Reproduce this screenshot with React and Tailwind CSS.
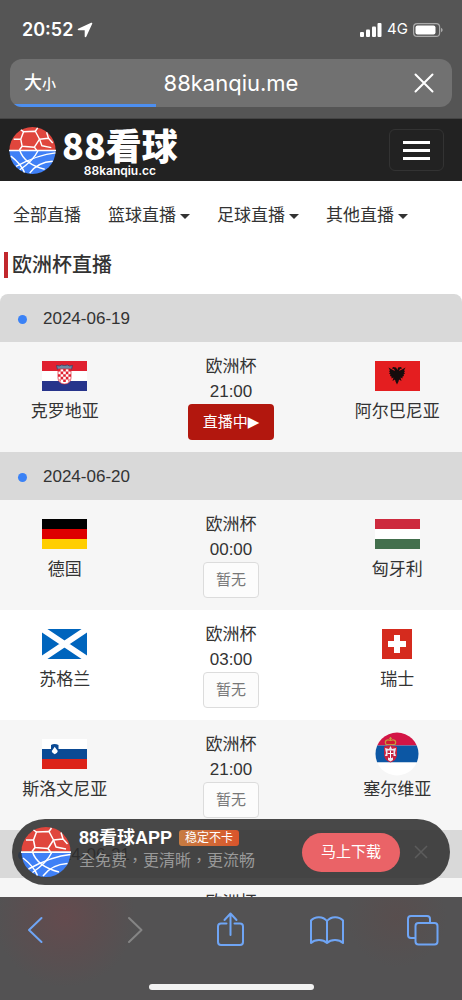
import React from "react";

function BallLogo({ className }) {
  return (
    <svg viewBox="0 0 100 100" className={className} aria-hidden="true">
      <path d="M1 49A49 49 0 0 1 99 49Z" fill="#e0463d" />
      <path d="M1 51A49 49 0 0 0 99 51Z" fill="#3f80f6" />
      <g fill="none" stroke="#fff" strokeWidth="3" strokeLinejoin="round">
        <path d="M0 50H100" strokeWidth="3.5" />
        <path d="M31 10L56 9L65 26L54 43L28 41L25 26Z" />
        <path d="M31 10L25 6M56 9L61 2M25 26L10 26M28 41L22 49M54 43L59 50M65 26L84 24M84 24L80 11M84 24L93 34M65 26L70 40L90 44" />
        <path d="M4 62C17 72 28 85 33 97" />
        <path d="M99 55C66 58 37 72 15 84" />
        <path d="M23 50C29 68 45 82 76 90" />
        <path d="M62 50C54 67 39 80 23 91" />
        <path d="M93 73C75 74 56 82 44 98" />
      </g>
    </svg>
  );
}

const flagBox = "h-[30px] w-[45px]";

const flags = {
  croatia: (
    <svg viewBox="0 0 45 30" className={flagBox} aria-hidden="true">
      <path fill="#fff" d="M0 0h45v30H0z" />
      <path fill="#e02030" d="M0 0h45v10H0z" />
      <path fill="#27348b" d="M0 20h45v10H0z" />
      <path d="M15.500 8.500l-1-4 3 .5 2-1 3 .5 3-.5 2 1 3-.5-1 4z" fill="#6c8ba5" stroke="#34446b" strokeWidth=".8" />
      <path d="M16 8h13v9c0 8-13 8-13 0z" fill="#fff" />
      <g fill="#e02030">
        <path d="M16 8h2.6v2.6H16zM21.2 8h2.6v2.6h-2.6zM26.4 8H29v2.6h-2.6zM18.6 10.600h2.6v2.6h-2.6zM23.800 10.600h2.6v2.6h-2.6zM16 13.200h2.6v2.600H16zM21.200 13.200h2.600v2.600h-2.600zM26.400 13.200H29v2.600h-2.600zM18.600 15.800h2.600v2.600h-2.600zM23.800 15.800h2.600v2.600h-2.600zM17 18.400h1.600V21zM21.200 18.400h2.600v2.600h-2.600zM26.400 18.400H28l-1.600 2.600z" />
      </g>
      <path d="M16 8h13v9c0 8-13 8-13 0z" fill="none" stroke="#e02030" strokeWidth=".7" />
    </svg>
  ),
  albania: (
    <svg viewBox="0 0 45 30" className={flagBox} aria-hidden="true">
      <path fill="#e41e20" d="M0 0h45v30H0z" />
      <path d="M22.500 9l-1.500-2.500-3-.5-1 1.500 2 .5 1 2-3-1.500-3.500-2 1.500 3-1 .5 1 1.500-1 1 1.500 1-.5 1.500 1.500.5v2l2-1-1 3.500 2.500-1.500.5 2 1.500 3 1.500-3 .5-2 2.500 1.500-1-3.500 2 1v-2l1.500-.5-.5-1.500 1.500-1-1-1 1-1.500-1-.5 1.500-3-3.500 2-3 1.500 1-2 2-.5-1-1.500-3 .5z" fill="#160c0c" />
    </svg>
  ),
  germany: (
    <svg viewBox="0 0 45 30" className={flagBox} aria-hidden="true">
      <path d="M0 0h45v10H0z" />
      <path fill="#de0000" d="M0 10h45v10H0z" />
      <path fill="#ffce00" d="M0 20h45v10H0z" />
    </svg>
  ),
  hungary: (
    <svg viewBox="0 0 45 30" className={flagBox} aria-hidden="true">
      <path fill="#fff" d="M0 0h45v30H0z" />
      <path fill="#cd2a3e" d="M0 0h45v10H0z" />
      <path fill="#436f4d" d="M0 20h45v10H0z" />
    </svg>
  ),
  scotland: (
    <svg viewBox="0 0 45 30" className={flagBox} aria-hidden="true">
      <path fill="#0065bd" d="M0 0h45v30H0z" />
      <path d="M0 0L45 30M45 0L0 30" stroke="#fff" strokeWidth="6" />
    </svg>
  ),
  switzerland: (
    <svg viewBox="0 0 30 30" className="h-[30px] w-[30px]" aria-hidden="true">
      <path fill="#d52b1e" d="M0 0h30v30H0z" />
      <path fill="#fff" d="M12 6h6v6h6v6h-6v6h-6v-6H6v-6h6z" />
    </svg>
  ),
  slovenia: (
    <svg viewBox="0 0 45 30" className={flagBox} aria-hidden="true">
      <path fill="#fff" d="M0 0h45v10H0z" />
      <path fill="#0b4a94" d="M0 10h45v10H0z" />
      <path fill="#dc2319" d="M0 20h45v10H0z" />
      <path d="M9 6c2-1.500 5-1.500 7.500 0v5c0 2.500-1.500 4-3.700 5C10.500 15 9 13.500 9 11z" fill="#0b4a94" />
      <path d="M9.700 12l1.500-2 1.500-2.200L14.300 10l1.500 2c-.3 1.500-1.500 2.500-3 3.200-1.500-.7-2.800-1.700-3.100-3.200z" fill="#fff" />
    </svg>
  ),
  serbia: (
    <svg viewBox="0 0 44 44" className="h-[44px] w-[44px]" aria-hidden="true">
      <clipPath id="serbia-disc">
        <circle cx="22" cy="22" r="21.500" />
      </clipPath>
      <g clipPath="url(#serbia-disc)">
        <path fill="#d31545" d="M0 0h44v13.500H0z" />
        <path fill="#0c57a4" d="M0 13.500h44v17H0z" />
        <path fill="#fff" d="M0 30.500h44V44H0z" />
        <path d="M9 15c3-2 8-2 13 0v7c0 4-2 7-6.500 8.500C11 29 9 26 9 22z" fill="#c9223f" />
        <path d="M15.500 14l1.500 3 4-1-1 5 1 3-3 0 0 4-2.500 1.500L13 28v-4h-3l1-3-1-5 4 1z" fill="#eceaf2" />
        <path d="M12.500 18.500h6v6c-1 2-5 2-6 0z" fill="#c9223f" />
        <path d="M15.500 18.500v7.500M12.500 21.500h6" stroke="#fff" strokeWidth="1" />
        <path d="M11 12.500c-2-4 1-5.500 4.500-4 3.500-1.500 6.500 0 4.500 4z" fill="#d3192f" stroke="#c49a3c" strokeWidth="1.200" />
        <path d="M15.500 5v3M14 6.300h3" stroke="#c49a3c" />
      </g>
    </svg>
  ),
  denmark: (
    <svg viewBox="0 0 45 30" className={flagBox} aria-hidden="true">
      <path fill="#c8102e" d="M0 0h45v30H0z" />
      <path d="M17.500 0v30M0 15h45" stroke="#fff" strokeWidth="5" />
    </svg>
  ),
  england: (
    <svg viewBox="0 0 45 30" className={flagBox} aria-hidden="true">
      <path fill="#fff" d="M0 0h45v30H0z" />
      <path d="M22.500 0v30M0 15h45" stroke="#ce1124" strokeWidth="5" />
    </svg>
  ),
};

const schedule = [
  {
    date: "2024-06-19",
    matches: [
      { time: "21:00", live: true, home: ["croatia", "克罗地亚"], away: ["albania", "阿尔巴尼亚"] },
    ],
  },
  {
    date: "2024-06-20",
    matches: [
      { time: "00:00", home: ["germany", "德国"], away: ["hungary", "匈牙利"] },
      { time: "03:00", home: ["scotland", "苏格兰"], away: ["switzerland", "瑞士"] },
      { time: "21:00", home: ["slovenia", "斯洛文尼亚"], away: ["serbia", "塞尔维亚"] },
    ],
  },
  {
    date: "2024-06-21",
    matches: [{ time: "00:00", home: ["denmark", "丹麦"], away: ["england", "英格兰"] }],
  },
];

function Team({ team }) {
  return (
    <div className="flex flex-col items-center">
      <div className="flex h-[44px] items-center">{flags[team[0]]}</div>
      <span className="whitespace-nowrap leading-[28px]">{team[1]}</span>
    </div>
  );
}

function MatchRow({ match }) {
  return (
    <li className="grid grid-cols-[28%_1fr_28%] py-3 odd:bg-[#f6f6f6] even:bg-white">
      <Team team={match.home} />
      <div className="flex flex-col items-center">
        <span className="leading-[26px]">欧洲杯</span>
        <time className="leading-[24px]">{match.time}</time>
        {match.live ? (
          <button className="flex h-9 items-center rounded bg-[#b2170e] px-[15px] text-[15px] text-white">
            直播中<span className="font-['DejaVu_Sans']">▶</span>
          </button>
        ) : (
          <button className="h-9 rounded border border-[#dcdcdc] bg-[#fcfcfc] px-3 text-[15px] text-[#777]">
            暂无
          </button>
        )}
      </div>
      <Team team={match.away} />
    </li>
  );
}

function NavLink({ label, menu }) {
  return (
    <a href="#" className="flex items-center gap-1 whitespace-nowrap">
      {label}
      {menu && (
        <svg viewBox="0 0 10 5" className="h-[5px] w-[10px]" aria-hidden="true">
          <path d="M0 0h10L5 5z" fill="#333" />
        </svg>
      )}
    </a>
  );
}

function BrowserTop() {
  return (
    <header className="shrink-0 border-b border-[#444] bg-[#555] px-[10px] pb-[11px] font-[Inter,'Noto_Sans_CJK_SC',sans-serif] text-white">
      <div className="flex h-[59px] items-center justify-between pl-3 pr-[9px]">
        <div className="flex items-center gap-1">
          <span className="text-[18px] font-semibold">20:52</span>
          <svg viewBox="0 0 16 16" className="h-4 w-4" aria-hidden="true">
            <path d="M14.500 1.500L1.500 7.500H8.500V14.500z" fill="#fff" stroke="#fff" strokeWidth="1.600" strokeLinejoin="round" />
          </svg>
        </div>
        <div className="flex items-center gap-[5px]">
          <svg viewBox="0 0 22 14" className="h-[14px] w-[22px]" aria-hidden="true">
            <g fill="#fff">
              <rect x="0" y="9" width="4" height="5" rx="1" />
              <rect x="6" y="6.500" width="4" height="7.500" rx="1" />
              <rect x="12" y="3.500" width="4" height="10.500" rx="1" />
              <rect x="17.500" y="0" width="4" height="14" rx="1" />
            </g>
          </svg>
          <span className="text-[15px]">4G</span>
          <svg viewBox="0 0 30 14" className="h-[14px] w-[30px]" aria-hidden="true">
            <rect x=".6" y=".6" width="26" height="12.800" rx="3.500" fill="none" stroke="#aaa" strokeWidth="1.200" />
            <rect x="2.500" y="2.500" width="20" height="9" rx="2" fill="#fff" />
            <path d="M28 4.700q1.700.7 1.700 2.300T28 9.300z" fill="#aaa" />
          </svg>
        </div>
      </div>
      <div className="relative flex h-12 items-center justify-between overflow-hidden rounded-xl bg-[#717171] px-[14px]">
        <button className="w-7 whitespace-nowrap text-left font-medium" aria-label="大小">
          <span className="text-[18px]">大</span>
          <span className="text-[14px]">小</span>
        </button>
        <span className="text-[22px]">88kanqiu.me</span>
        <button className="flex w-7 justify-center" aria-label="停止">
          <svg viewBox="0 0 20 20" className="h-5 w-5" aria-hidden="true">
            <path d="M1.500 1.500l17 17M18.500 1.500l-17 17" stroke="#fff" strokeWidth="2" strokeLinecap="round" />
          </svg>
        </button>
        <div className="absolute bottom-0 left-0 h-[3px] w-[33%] bg-[#4d8ff0]" />
      </div>
    </header>
  );
}

function BrowserBottom() {
  const icon = "h-9 w-[34px] fill-none stroke-[#6fa5f5] stroke-2";
  return (
    <footer className="flex shrink-0 flex-col items-center bg-[#535253] bg-[radial-gradient(circle_at_65px_20px,#644b4e_0px,#5b4e50_35px,transparent_70px),radial-gradient(circle_at_397px_20px,#584e4e_0px,transparent_50px)] pb-[10px]">
      <nav className="flex w-full justify-between px-[22px] pb-9 pt-[15px]">
        <button aria-label="后退">
          <svg viewBox="0 0 34 36" className={icon}>
            <path d="M19.500 6L7 18l12.500 12" strokeLinecap="round" strokeLinejoin="round" />
          </svg>
        </button>
        <button aria-label="前进">
          <svg viewBox="0 0 34 36" className="h-9 w-[34px] fill-none stroke-[#858585] stroke-2">
            <path d="M11 6l12.500 12L11 30" strokeLinecap="round" strokeLinejoin="round" />
          </svg>
        </button>
        <button aria-label="分享">
          <svg viewBox="0 0 34 36" className={icon}>
            <path d="M12.500 11.500H7q-3 0-3 3V30q0 3 3 3h19q3 0 3-3V14.500q0-3-3-3h-5.500M16.500 23V2M10.500 8l6-6.500 6 6.500" strokeLinecap="round" strokeLinejoin="round" />
          </svg>
        </button>
        <button aria-label="书签">
          <svg viewBox="0 0 34 36" className={icon}>
            <path d="M17 9C13 4 5 4 1 8.500V31c4-4 12-4 16 0 4-4 12-4 16 0V8.500C29 4 21 4 17 9z" strokeLinejoin="round" />
            <path d="M17 9v22" />
          </svg>
        </button>
        <button aria-label="标签页">
          <svg viewBox="0 0 34 36" className={icon}>
            <rect x="9.500" y="11" width="22" height="21.500" rx="3" />
            <path d="M9.500 26H5q-3 0-3-3V7q0-3 3-3h16q3 0 3 3v4" />
          </svg>
        </button>
      </nav>
      <div className="h-[6px] w-[165px] rounded-full bg-[#f2f2f2]" />
    </footer>
  );
}

function DownloadBanner() {
  return (
    <aside className="absolute inset-x-3 bottom-3 flex h-[66px] items-center rounded-full bg-[#2e2e2e]/[0.87] pl-[9px] pr-[22px]">
      <BallLogo className="h-[50px] w-[50px] shrink-0" />
      <div className="ml-2 flex flex-1 flex-col whitespace-nowrap pb-2">
        <div className="flex items-center gap-[7px]">
          <strong className="text-[18px] leading-[22px] text-white">88看球APP</strong>
          <span className="rounded-[3px] bg-linear-to-r from-[#c67c42] to-[#d9542b] px-[6px] text-[12px] leading-4 text-white">
            稳定不卡
          </span>
        </div>
        <span lang="zh-TW" className="font-['Noto_Sans_CJK_TC',sans-serif] text-[16px] leading-[20px] text-[#999]">
          全免费，更清晰，更流畅
        </span>
      </div>
      <button className="h-[39px] shrink-0 rounded-full bg-[#ea6367] px-[19px] text-[15px] text-white">马上下载</button>
      <button className="ml-[14px] shrink-0" aria-label="关闭">
        <svg viewBox="0 0 14 14" className="h-[14px] w-[14px]">
          <path d="M1 1l12 12M13 1L1 13" stroke="#5c5c5c" strokeWidth="1.500" />
        </svg>
      </button>
    </aside>
  );
}

export default function App() {
  return (
    <div className="flex h-screen flex-col bg-white font-['Liberation_Sans','Noto_Sans_CJK_SC',sans-serif] text-[17px] text-[#333]">
      <BrowserTop />
      <div className="relative min-h-0 flex-1 overflow-hidden">
        <div className="flex items-center justify-between bg-[#222] py-1 pl-[9px] pr-[18px]">
          <a href="#" className="flex items-center gap-[6px] text-white">
            <BallLogo className="h-[47px] w-[47px]" />
            <span className="flex flex-col items-center">
              <span className="font-['Noto_Sans_CJK_SC',sans-serif] text-[36px] font-black leading-[42px]">88看球</span>
              <span className="font-[Inter,sans-serif] text-[12px] font-semibold leading-[12px]">88kanqiu.cc</span>
            </span>
          </a>
          <button
            className="flex h-[42px] w-[55px] flex-col items-center justify-center gap-[5px] rounded-md border border-[#333]"
            aria-label="菜单"
          >
            <span className="h-[3px] w-[27px] bg-white" />
            <span className="h-[3px] w-[27px] bg-white" />
            <span className="h-[3px] w-[27px] bg-white" />
          </button>
        </div>
        <nav className="flex h-[70px] items-center gap-[27px] pl-[13px]">
          <NavLink label="全部直播" />
          <NavLink label="篮球直播" menu />
          <NavLink label="足球直播" menu />
          <NavLink label="其他直播" menu />
        </nav>
        <main>
          <h1 className="mb-4 ml-1 mt-px border-l-4 border-[#c1272d] pl-1 text-[20px] font-medium leading-[26px]">
            欧洲杯直播
          </h1>
          <div className="overflow-hidden rounded-t-lg">
            {schedule.map((day) => (
              <section key={day.date}>
                <h2 className="flex h-12 items-center gap-4 bg-[#d9d9d9] pl-[18px] pt-[2px]">
                  <span className="h-[9px] w-[9px] rounded-full bg-[#3b82f6]" />
                  {day.date}
                </h2>
                <ul>
                  {day.matches.map((match) => (
                    <MatchRow key={match.time} match={match} />
                  ))}
                </ul>
              </section>
            ))}
          </div>
        </main>
        <DownloadBanner />
      </div>
      <BrowserBottom />
    </div>
  );
}
